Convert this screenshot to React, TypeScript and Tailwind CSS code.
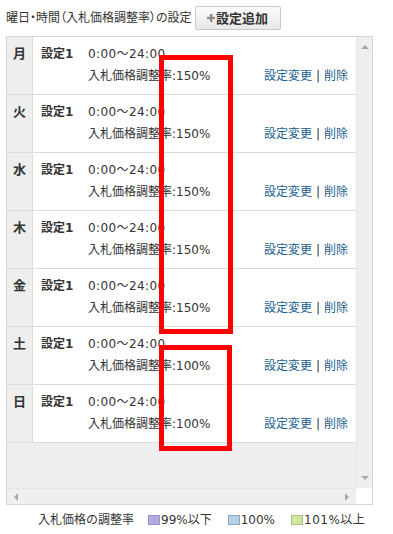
import React from "react";

const days = ["月", "火", "水", "木", "金", "土", "日"];
const rates = ["150", "150", "150", "150", "150", "100", "100"];

function Row({ day, rate }: { day: string; rate: string }) {
  return (
    <div className="flex h-[58px] border-b border-[#dcdcdc] bg-white shrink-0">
      <div className="w-[26px] bg-[#eeeeee] border-r border-[#dcdcdc] flex justify-center pt-[8px]">
        <span className="font-bold leading-[18px] text-[13px] text-[#333]">{day}</span>
      </div>
      <div className="flex-1 flex pl-[8px] pt-[8px]">
        <div className="w-[47px] font-bold leading-[18px] text-[#333]">設定1</div>
        <div className="flex-1 flex flex-col pr-[8px]">
          <div className="leading-[18px] tracking-[0.4px]">0:00〜24:00</div>
          <div className="mt-[4px] leading-[18px] flex justify-between">
            <span>入札価格調整率:{rate}%</span>
            <span>
              <span className="text-[#1b5e8e]">設定変更</span>
              <span className="text-[#333] mx-[4px]">|</span>
              <span className="text-[#1b5e8e]">削除</span>
            </span>
          </div>
        </div>
      </div>
    </div>
  );
}

export default function App() {
  return (
    <div
      className="w-[393px] h-[534px] bg-white relative text-[12px] text-[#333] overflow-hidden"
      style={{ fontFamily: '"DejaVu Sans", "Noto Sans CJK JP", sans-serif' }}
    >
      <div className="flex items-center h-[24px] mt-[6px] pl-[6px]">
        <span className="[font-feature-settings:'palt']">曜日・時間（入札価格調整率）の設定</span>
        <button className="ml-[3px] w-[86px] h-[24px] border border-[#c8c8c8] rounded-[2px] bg-gradient-to-b from-[#fbfbfb] to-[#e8e8e8] flex items-center justify-center">
          <svg width="8" height="8" viewBox="0 0 8 8" className="mr-[1px]">
            <rect x="3" y="0" width="2.4" height="8" fill="#8a8a8a" />
            <rect x="0" y="2.8" width="8" height="2.4" fill="#8a8a8a" />
          </svg>
          <span className="font-bold text-[13px] text-[#333] leading-none">設定追加</span>
        </button>
      </div>

      <div className="mt-[6px] ml-[6px] w-[367px] h-[469px] border border-[#d6d6d6] flex flex-col">
        <div className="flex flex-1 min-h-0">
          <div className="flex-1 bg-[#efefef] flex flex-col">
            {days.map((d, i) => (
              <Row key={d} day={d} rate={rates[i]} />
            ))}
          </div>
          <div className="w-[16px] bg-[#efefef] border-l border-[#e4e4e4] flex flex-col items-center justify-between py-[8px]">
            <div className="w-0 h-0 border-l-[4px] border-r-[4px] border-b-[4px] border-l-transparent border-r-transparent border-b-[#a8a8a8]" />
            <div className="w-0 h-0 border-l-[4px] border-r-[4px] border-t-[4px] border-l-transparent border-r-transparent border-t-[#a8a8a8]" />
          </div>
        </div>
        <div className="h-[16px] flex shrink-0">
          <div className="flex-1 bg-[#efefef] border-t border-[#e4e4e4] flex items-center justify-between px-[7px]">
            <div className="w-0 h-0 border-t-[4px] border-b-[4px] border-r-[4px] border-t-transparent border-b-transparent border-r-[#a8a8a8]" />
            <div className="w-0 h-0 border-t-[4px] border-b-[4px] border-l-[4px] border-t-transparent border-b-transparent border-l-[#a8a8a8]" />
          </div>
          <div className="w-[16px] bg-white" />
        </div>
      </div>

      <div className="h-[29px] flex items-center pl-[38px] text-[12px] text-[#333]">
        <span>入札価格の調整率</span>
        <span className="ml-[14px] w-[12px] h-[10px] bg-[#b4a8e0] border border-[#9a8fcf]" />
        <span className="ml-[1px]">99%以下</span>
        <span className="ml-[16px] w-[12px] h-[10px] bg-[#bacee9] border border-[#8ea7c9]" />
        <span className="ml-[1px]">100%</span>
        <span className="ml-[16px] w-[12px] h-[10px] bg-[#d0e6a3] border border-[#a8c47b]" />
        <span className="ml-[1px] tracking-[0.5px]">101%以上</span>
      </div>

      <div className="absolute left-[159px] top-[55px] w-[74px] h-[279px] border-[5px] border-[#ff0000]" />
      <div className="absolute left-[159px] top-[345px] w-[73px] h-[106px] border-[5px] border-[#ff0000]" />
    </div>
  );
}
